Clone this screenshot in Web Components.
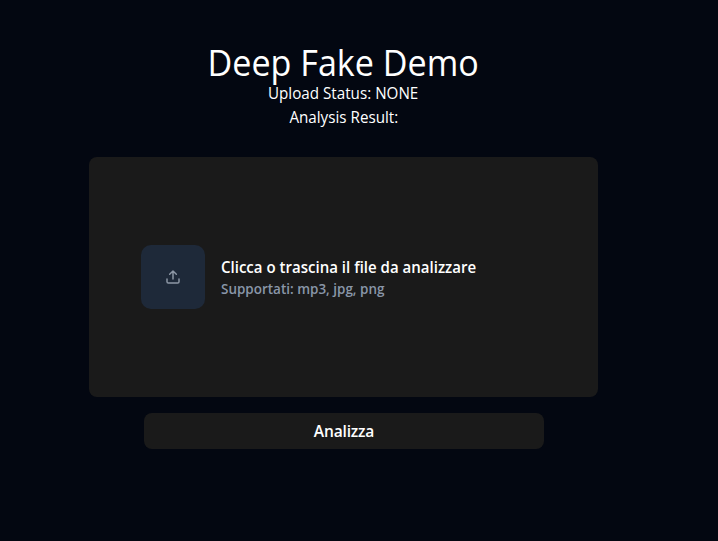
<!DOCTYPE html>
<html lang="it"><head><meta charset="utf-8"><title>Deep Fake Demo</title>
<style>body{margin:0;background:#030711;color:#fff;font:16px/24px "Noto Sans",sans-serif}</style></head>
<body>
<demo-page>
<status-header><span slot="title">Deep Fake Demo</span><span slot="status">Upload Status: NONE</span><span slot="result">Analysis Result:</span></status-header>
<file-drop><span slot="label">Clicca o trascina il file da analizzare</span><span slot="hint">Supportati: mp3, jpg, png</span></file-drop>
<action-button>Analizza</action-button>
</demo-page>
<script>
const define=(name,html)=>customElements.define(name,class extends HTMLElement{
  constructor(){super();this.attachShadow({mode:'open'}).innerHTML=html;}
});
define('demo-page',`<style>:host{display:flex;flex-direction:column;align-items:center;width:687px;height:541px;box-sizing:border-box;padding-top:45px}</style><slot></slot>`);
define('status-header',`<style>:host{display:flex;flex-direction:column;align-items:center;height:112px;white-space:nowrap}
.t{font:400 36px/36px "Open Sans","Noto Sans",sans-serif;transform:scaleX(.947)}
.s{font:400 15.6px/24px "Open Sans","Noto Sans",sans-serif;transform:scaleX(.975)}</style><div class="t"><slot name="title"></slot></div><div class="s"><slot name="status"></slot></div><div class="s"><slot name="result"></slot></div>`);
define('upload-icon',`<style>:host{display:grid;place-items:center;width:64px;height:64px;border-radius:10px;background:#1e2939;color:#8e98a6}</style>
<svg width="16" height="16" viewBox="0 0 24 24" fill="none" stroke="currentColor" stroke-width="2.2" stroke-linecap="round" stroke-linejoin="round"><path d="M21 15v4a2 2 0 0 1-2 2H5a2 2 0 0 1-2-2v-4M17 8l-5-5-5 5M12 3v12"/></svg>`);
define('file-drop',`<style>:host{display:flex;align-items:center;gap:16px;width:509px;height:240px;box-sizing:border-box;padding-left:52px;background:#1a1a1a;border-radius:8px;white-space:nowrap}
.text{padding-bottom:2px}
.l{font:600 15.6px/24px "Open Sans","Noto Sans",sans-serif;transform:scaleX(.964);transform-origin:left}.h{font:600 13.8px/19px "Open Sans","Noto Sans",sans-serif;color:#8996a8;transform:scaleX(.976);transform-origin:left}</style><upload-icon></upload-icon><div class="text"><div class="l"><slot name="label"></slot></div><div class="h"><slot name="hint"></slot></div></div>`);
define('action-button',`<style>:host{display:block;width:400px;margin:16px 0 0 1px}button{display:block;width:100%;height:36px;padding:0;border:0;border-radius:8px;background:#1a1a1a;color:#fff;font:600 15.6px/36px "Open Sans","Noto Sans",sans-serif;letter-spacing:-.2px}</style><button><slot></slot></button>`);
</script></body></html>
